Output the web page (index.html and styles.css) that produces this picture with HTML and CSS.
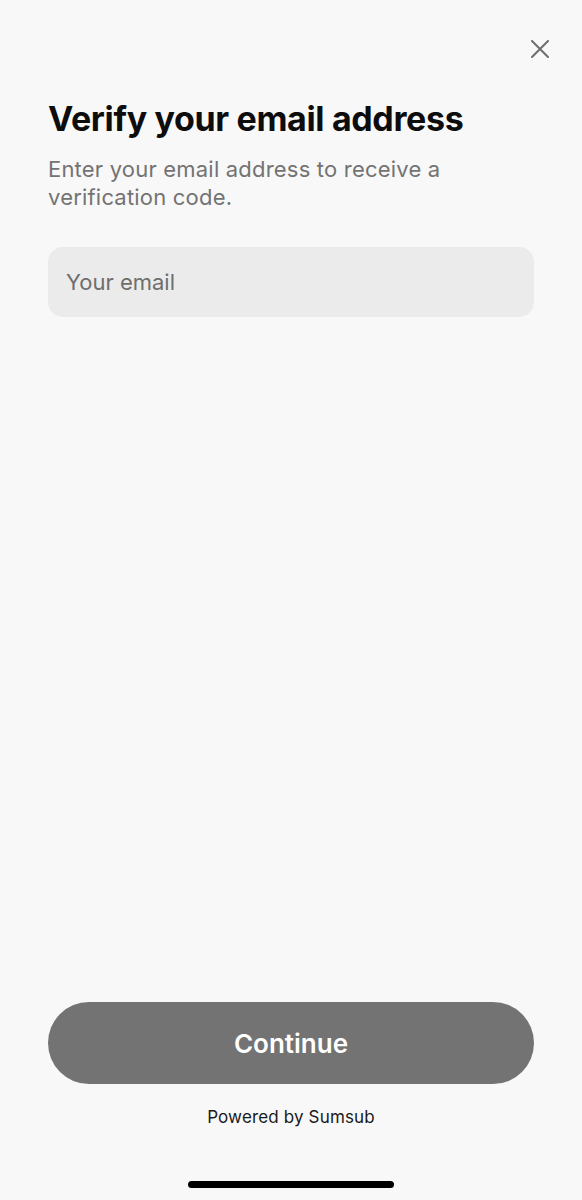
FILE: index.html
```html
<!DOCTYPE html>
<html lang="en">
<head>
<meta charset="utf-8">
<title>Verify your email address</title>
<link rel="stylesheet" href="styles.css">
</head>
<body>
<div class="screen">
  <div class="topbar">
    <button class="close" aria-label="Close">
      <svg width="18" height="18" viewBox="0 0 18 18"><path d="M1 1 L17 17 M17 1 L1 17" stroke="#6e6e6e" stroke-width="2" stroke-linecap="round" fill="none"/></svg>
    </button>
  </div>
  <div class="content">
    <h1 class="title">Verify your email address</h1>
    <p class="subtitle">Enter your email address to receive a verification code.</p>
    <div class="field"><span class="placeholder">Your email</span></div>
  </div>
  <div class="spacer"></div>
  <div class="footer">
    <button class="continue">Continue</button>
    <div class="powered">Powered by Sumsub</div>
  </div>
  <div class="home-wrap"><div class="home"></div></div>
</div>
</body>
</html>
```

FILE: styles.css
```css
html, body {
  margin: 0;
  padding: 0;
  background: #f8f8f8;
}
body {
  font-family: Inter, "Noto Sans", "Liberation Sans", sans-serif;
  color: #111;
}
.screen {
  height: 1200px;
  display: flex;
  flex-direction: column;
}
.topbar {
  display: flex;
  justify-content: flex-end;
  padding: 40px 33px 0 0;
  height: 18px;
}
.close {
  width: 18px;
  height: 18px;
  padding: 0;
  border: 0;
  background: none;
  display: block;
}
.close svg { display: block; }
.content {
  padding: 0 48px;
}
.title {
  margin: 41px 0 0;
  font-size: 34px;
  line-height: 40px;
  font-weight: 700;
  letter-spacing: -0.35px;
  color: #0d0d0d;
}
.subtitle {
  margin: 16px 0 0;
  font-size: 22px;
  line-height: 28px;
  font-weight: 400;
  letter-spacing: 0.2px;
  color: #737373;
  width: 430px;
}
.field {
  margin-top: 36px;
  height: 70px;
  border-radius: 15px;
  background: #ebebeb;
  display: flex;
  align-items: center;
  padding-left: 18px;
}
.placeholder {
  font-size: 22px;
  color: #6e6e6e;
}
.spacer { flex: 1; }
.footer {
  padding: 0 48px;
  display: flex;
  flex-direction: column;
  align-items: center;
}
.continue {
  width: 486px;
  height: 82px;
  border: 0;
  border-radius: 41px;
  background: #737373;
  color: #fff;
  font-family: inherit;
  font-size: 26px;
  font-weight: 600;
}
.powered {
  margin-top: 21px;
  font-size: 17px;
  line-height: 24px;
  letter-spacing: 0.15px;
  color: #1a1a1a;
}
.home-wrap {
  display: flex;
  justify-content: center;
  padding: 52px 0 12px;
}
.home {
  width: 206px;
  height: 7px;
  border-radius: 4px;
  background: #000;
}
```
